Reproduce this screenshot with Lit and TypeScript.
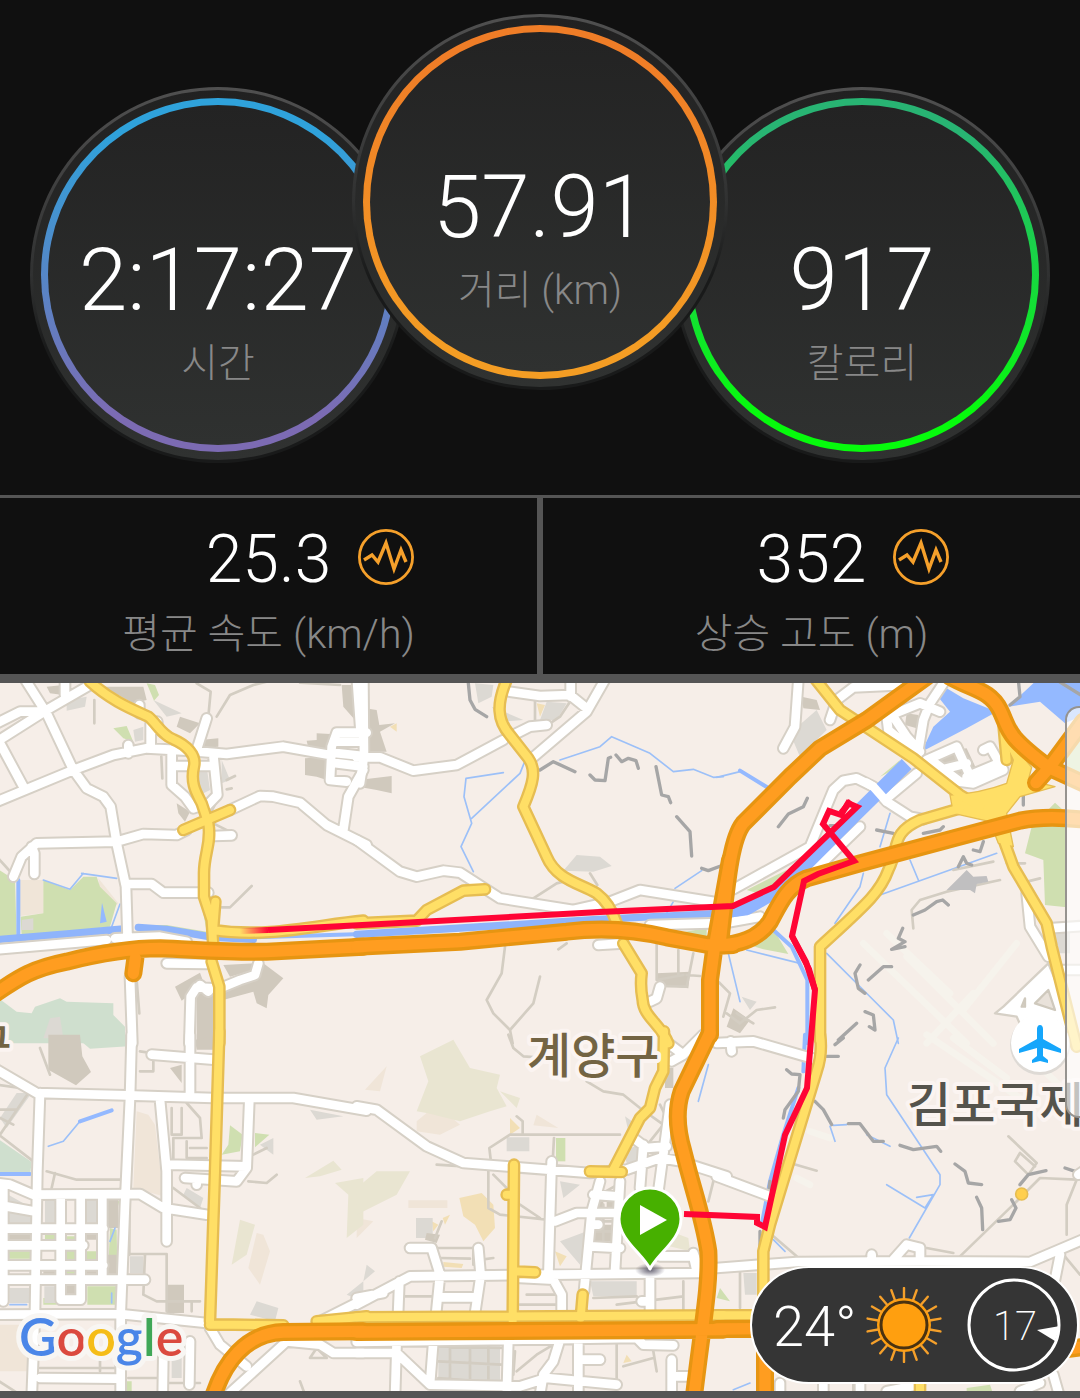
import { LitElement, html, svg, css } from "lit";
import { customElement, property } from "lit/decorators.js";

type Layer =
  | "park" | "wood" | "tan" | "hill" | "ochre" | "building" | "block" | "lake" | "plaza"
  | "river" | "canal" | "stream" | "runway" | "lane" | "trail" | "street" | "avenue" | "avenueArea" | "motorway";

interface Tile {
  x: number;
  y: number;
  layers: Partial<Record<Layer, string>>;
}

// Each tile covers 1080 x 1080 map units; path data is local to its tile.
const TILES: Tile[] = [
  {
    x: 0, y: -9,
    layers: {
      park: "M-10 565L45 600L50 775L-10 780ZM130 600L210 630L250 590L290 590L300 620L350 670L330 740L65 772L62 710L130 700ZM340 145L380 138L400 185L370 175ZM440 10L465 15L477 45L462 62ZM420 735L500 735L620 755L610 700L640 690L640 770Z",
      wood: "M-10 950L50 995L95 1000L105 980L180 955L200 965L340 970L340 1005L375 1040L375 1090L-10 1090Z",
      tan: "M60 600L130 600L130 700L60 708ZM295 595L355 670L345 680L300 640Z",
      building: "M200 60L260 50L255 80L200 92ZM460 60L545 100L500 110ZM400 150L430 140L430 180L405 185ZM590 270L620 260L630 330L600 345ZM150 1015L180 1010L190 1075L130 1075ZM65 720L100 715L100 750L65 750ZM665 240L690 300L665 310Z",
      block: "M525 920L600 878L610 905L575 940L545 962ZM670 855L765 850L760 870L690 890ZM680 925L745 905L790 850L850 895L805 945L800 985L770 970L760 935L650 965L640 1090L590 1090L590 940L640 930ZM920 182L950 180L950 160L990 162L990 205L925 205ZM915 235L985 230L980 300L950 290L915 285ZM1025 15L1065 15L1065 120L1030 80ZM140 20L190 15L190 45L150 40ZM310 20L430 20L440 60L400 70ZM540 110L600 130L570 160L530 140ZM600 180L655 175L655 200L600 205ZM530 370L570 395L555 425L535 400Z",
      lake: "M306 668L320 725L300 730Z",
      river: "M-10 779L200 762L370 747M415 742L500 748L640 772L760 778",
      canal: "M55 600L55 775M640 775L1090 762",
      stream: "M245 580L350 595M130 600L210 628L250 580M360 672L335 740",
      lane: "M590 10L632 35L625 110M650 110L690 45L760 15L800 5M900 8L1020 15M283 60L283 130M665 682L690 682L755 618M-10 530L40 585M640 430L700 460M484 230L487 295M680 300L705 288M680 328L695 325M660 345L610 440M410 900L418 1000",
      street: "M70 -10L140 100L220 270L260 325L310 350L332 380L352 500L378 620L383 780M-10 185L140 90L270 15M-10 130L60 95L130 95M0 190L70 320M195 10V45M-10 365L220 270L340 225L440 205L560 212L680 222L850 200L990 225M385 195V220M40 590L65 530L110 490L350 485L430 462L530 465L560 450M95 500L103 520V582M690 390L780 348L820 350L900 368L980 435L1100 495M385 612L455 612L490 638L625 638M452 205V130M590 210L620 115M515 222V315L555 350L580 385L610 375M640 225L652 345L620 378M520 258H640M418 75V100M472 125V150M640 468L695 466M1100 158H1010L995 200L990 300L1040 305M1000 185H1090M995 218L1090 228M995 248L1090 260M1090 270L1045 350L1030 450M1070 -10L1082 160M-10 808L320 780M345 775L480 770L560 785M500 850L620 852M660 925L720 900L765 885L775 850M640 925L590 922L572 950L568 1090M600 915L625 935M390 890L397 1090",
      avenue: "M270 5C330 60 390 85 445 110C470 130 485 165 520 178C560 195 590 225 582 260C570 310 590 340 605 370L625 430C635 490 612 520 612 580V650L635 720L640 800M635 845L658 920V1090M550 450L690 390M646 665L640 740M640 750C800 775 950 735 1090 722",
      motorway: "M-20 945C60 890 100 865 200 845C300 820 400 805 480 805C600 810 700 818 800 815L1090 800M406 835L400 880",
    },
  },
  {
    x: 1080, y: -9,
    layers: {
      building: "M395 80L420 90L490 120L430 125ZM560 65L620 70L590 120L540 120ZM345 10L400 15L395 50L355 70ZM610 572L650 525L720 530L755 558L700 575Z",
      block: "M15 85L50 90L58 135L105 130L60 155L80 215L20 215ZM-5 300L95 288L95 340L50 330L-5 320ZM890 880L990 875L985 925L895 915Z",
      park: "M850 775L1040 745L1040 775L900 770Z",
      ochre: "M530 70L555 75L540 110ZM90 140L110 130L110 155Z",
      river: "M-10 763L400 738L700 719L1080 700",
      stream: "M430 278L318 295L312 350L335 430L303 500L340 575M335 415L480 280L500 230M600 240L720 200L755 170L790 185L870 220L940 275L1000 268L1060 292L1090 290M945 625L1025 572M940 665L920 700",
      lane: "M435 800L425 880L380 960L400 1000L450 1050L458 1090M450 1050L520 970L540 890M520 655L590 610L610 605M690 580L712 615M595 808L620 790M890 790V900L970 885M955 810V885M1000 820L980 920L900 918M525 60V140M640 50L600 110L570 130M980 885L1020 888",
      trail: "M325 10L330 60L345 88L380 110M540 270L580 245L645 275M690 285L705 300L735 302L745 235L752 232M768 225L785 245L805 235L828 242L835 265M888 260L905 345L925 350L932 368M950 410L990 455L995 528M1025 565L1045 572L1090 555",
      street: "M10 -10L12 230L0 310M-10 232H60L160 272L290 255L430 180M460 165L510 140L560 135M510 240L680 95L740 -10M450 35L540 48L630 45L680 85M632 10V50M-10 480L120 575L170 590L250 572L300 578L420 655L640 690L750 665L840 630L1060 665M870 735L1050 730M715 795L790 790M870 965L890 955L900 920",
      avenue: "M440 0C410 70 410 120 450 165L505 235C530 270 520 310 490 380L560 530C590 600 660 610 710 640Q750 670 770 730M790 790L845 880Q840 920 848 960C850 1010 900 1030 925 1090M-10 730L170 722L200 690L310 632L375 628",
      motorway: "M-10 800L300 785L620 755C740 740 850 755 920 772L1060 798L1120 795M1110 540L1065 790L1050 900V1065",
    },
  },
  {
    x: 2160, y: -9,
    layers: {
      park: "M1005 368L1040 400V682L975 675L970 540L915 520L935 440ZM1035 190L1090 150V310L1040 280ZM70 790L160 748L205 822L130 808ZM80 630L200 570L150 650ZM480 290L540 240L530 265ZM245 130L270 120L275 140L255 148Z",
      building: "M210 160L290 90L320 150L290 180L240 230ZM1000 760L1050 755V820H1010ZM65 950L110 965L90 990Z",
      block: "M560 100L595 105L590 145L555 135ZM245 50L290 60L300 90L250 85ZM40 985L90 1020L60 1060L20 1040ZM625 220L740 205L780 290L720 305Z",
      lake: "M605 215L640 140L690 95L650 45L680 25L730 55L830 95L740 145ZM865 80L940 10L940 -10H1100V100L1035 130L960 65Z",
      plaza: "M985 850L850 980L825 1000L890 1010L930 1100H1080L1030 960Z",
      river: "M-20 690L80 686L190 615",
      canal: "M160 750L215 800L262 900L262 1090M60 272L155 330",
      stream: "M-10 292L60 275M510 400L480 500M430 580L420 620L345 730M480 645L830 520M570 540L595 600M320 820L430 930L520 1020L535 1090M25 820L60 965M80 810L240 850",
      runway: "M430 790L740 1090M560 830L820 1090M730 990L890 790M500 760L690 940M620 1090L760 940",
      lane: "M580 745L575 690L600 660L680 635L840 600M700 570L820 545M860 550L915 550M-10 900L30 940L10 1010M20 1000L60 1030L110 990L165 982M50 1000L100 1030M900 610L960 595",
      trail: "M175 440L205 402L250 380L262 355M470 450L520 460M610 460L660 450L670 440M580 705L615 690L650 665L668 660L685 675M548 745L535 775L555 785L515 808L555 800M445 900L490 860L515 860M420 855L405 880L415 925L435 940M355 1080L410 1030M435 995L460 1005L465 1050L448 1040M870 75L900 50L895 0M715 560L730 530L740 550L755 555M760 510L780 515L790 485M910 340V375M1010 0L1090 50M330 437L410 437",
      street: "M235 0L225 140L190 205M330 120L350 60L400 22L560 15M590 240L610 120L630 70L670 10M520 110L560 170L600 215M500 110L600 70L660 95M500 110L505 150L590 220M500 355L590 280M40 628L270 500L340 330L370 302L410 295L460 320L500 365L570 410L610 418M20 728L120 710M280 575L420 440M620 240L710 200L760 310L720 305L640 245M660 270L740 250M760 310L850 270L810 200L790 210M740 290L860 240M920 640L930 740L985 830M985 745L1090 738M1015 870H1090M850 375L830 400",
      avenue: "M280 -10L360 90L580 235L720 345L780 380M720 385L600 420C510 460 540 500 505 570C480 640 430 680 300 800V1080M840 450L880 560L980 730L995 800L1070 1100M850 130L860 240",
      avenueArea: "M690 345Q780 340 860 310L880 240L850 180L840 130H855L900 220L935 262L925 300L1005 320L900 350L860 400L880 500L835 490L810 425L700 400Z",
      motorway: "M620 -10L440 120L300 205L210 290L70 430C30 480 20 620 0 790M-30 795C60 800 120 770 150 725C180 670 200 620 260 595L420 550L700 475L900 422Q980 405 1100 420M690 -10C760 30 810 30 840 90C870 150 850 160 985 262L1090 310M1090 125L990 260L948 308",
    },
  },
  {
    x: 0, y: 1065,
    layers: {
      park: "M690 262L728 290L720 340L665 350L685 320ZM765 285L808 290L765 328ZM197 595H225V710H197ZM262 745H348V800H262ZM25 640H92V662H25ZM335 485L358 490L350 520L335 510ZM330 570L350 575L352 700L325 690ZM135 585H165V605H135ZM258 640H290V665H258ZM375 1030H395V1070H375ZM130 780H170V800H130Z",
      wood: "M220 -10H385V25L270 32ZM-10 300L95 372L90 412L-10 412Z",
      tan: "M410 220L445 230L465 260L490 475L400 450ZM-10 860L90 860L85 1000L-10 1000Z",
      hill: "M915 420L1000 368L1025 395L960 415ZM1005 435L1090 420V560L1040 600L1045 470ZM720 545L765 560L740 650L695 680Z",
      ochre: "",
      building: "M135 485H172V560H135ZM255 485H292V560H255ZM28 750H88V795H28ZM133 745H170V795H133ZM390 655H430V705H390ZM560 450L610 480L600 510L550 470ZM780 320L820 300V350ZM770 790L835 810L825 850L750 830ZM1040 770L1090 730V790ZM515 960H545V1020H515ZM50 165H95L20 270L0 240ZM930 215L1030 235L950 245ZM25 470L95 510V560H25Z",
      block: "M145 -10H240L247 55L273 102L228 142L145 95ZM585 5L640 -5V35H590ZM500 740H552V825H500ZM195 740H230V772H195ZM25 585H95V610H25ZM252 585H295V605H252ZM252 690H295V712H252ZM130 690H170V712H130ZM510 90L545 80V135ZM320 485H355V570H320ZM320 650H350V712H320Z",
      stream: "M145 325L190 310L240 250L335 217M30 800H80M330 610L345 570M335 765V795",
      canal: "M240 250L335 217M-10 408H90",
      lane: "M140 400L230 425H365M165 405L155 450M390 648H500V820M435 650L430 770L470 790H600M575 790V820M515 210V290H545V210M560 195L600 240L605 300H520V380M560 310V360H620M570 330H620M420 100H460V70M420 40L560 60M745 430L800 435L830 410M760 350L800 330M-10 285L100 370M0 290L85 165M0 215H50M0 240L40 260M388 470V650M-10 1025L60 1070M520 450L600 510M300 950V1000M120 990H350M385 885H520V830M385 1020H480M500 1035H600M60 150L-10 140M150 110L120 30M900 1030L915 1070M930 960L950 930L980 960Z",
      street: "M-10 95L110 165L380 172L640 180L880 180L1100 218M120 165L112 400L105 820L95 1080M395 -10L390 180L375 500L362 830V1080M480 185L500 400V610M570 -10V170M455 50L640 65M500 380L740 385M748 185L740 390L710 430L555 420M590 430V440M-10 435L30 440L100 470L420 468L490 510L620 530M-10 500L100 520M-10 572H310M-10 622H180M-10 682H310M-10 725H435M10 440V790M182 480V785H242V480M307 480V720M120 622H250M-10 830L360 828L620 855M630 870L660 920L740 985M690 1065L860 910L960 920L1000 945H1090M120 1020L350 1022M570 910L568 1040M490 950L488 1080M960 850L1100 780",
      avenue: "M658 -20L645 400L630 850M630 860H700L850 862M950 850L1100 835",
      motorway: "M635 1090C670 970 740 885 850 882L1090 880",
    },
  },
  {
    x: 1080, y: 1065,
    layers: {
      park: "M588 300H616V370H588Z",
      tan: "M15 155L80 85L60 160ZM170 250L230 200L300 260L240 290L170 280ZM530 230L595 270L520 262ZM145 487H262V510H145ZM-310 585L-290 590L-270 640L-300 740L-335 690ZM-10 540L40 550L-10 600Z",
      hill: "M180 55L280 5L330 90L420 110L410 150L440 205L390 220L300 250L200 225L170 220L205 130ZM50 400L150 400L110 470L50 500L-10 530V450ZM420 160L480 180L470 210ZM905 570L985 600L990 640L910 620Z",
      ochre: "M298 480L365 465L400 500L405 570L370 610L345 560L310 535ZM450 240L480 270L450 290ZM248 540L270 530L255 560ZM215 550L235 560L220 580ZM585 640L620 655L600 685ZM250 672L310 678L305 690L250 686ZM800 950L815 970L790 975Z",
      building: "M440 298H508V340H440ZM168 540H218V600H168ZM600 430L660 440L610 480ZM600 610L680 580L660 680ZM690 730H830V775H700ZM235 925H420V1040H235ZM790 340L835 320V380L800 375ZM20 680L45 700L10 730ZM795 235L830 260L805 280Z",
      block: "M700 490H730V515H700ZM740 490H770V515H740ZM705 560H760V610H705ZM200 585L240 590L230 615L195 605ZM915 90H940V150H915Z",
      stream: "M1045 80L1015 190",
      lane: "M395 390L388 330L450 290H780M582 300L578 370M385 400V510L420 530L560 545M400 410L445 455M480 500L540 540M445 -10L460 30L490 55L560 60M680 130L730 160L790 170L840 210L910 260L870 310M230 630H340V680M240 660L330 662M245 550L225 600M470 235L488 250V285M230 380L310 385M235 925L425 930M235 970L425 980M235 1020L425 1035M270 920V1030M330 925V1035M385 925V1035M770 800L970 775M970 730V830M700 780L830 775M790 985L880 960M880 940L890 1000M700 550H770M700 580H770M730 500V620M1060 430L1045 490M500 770H600M480 800H600M125 775H340M470 1000L530 950L580 920M700 820H850M720 470L790 430M365 665L400 660M465 940L460 1010M770 910V1040M900 200L930 260",
      street: "M-10 205L50 215L200 325L310 375L690 405L800 395L900 360L960 370L1100 415M575 370L565 715M-10 800L150 715L400 712L1020 705M-10 780L70 765M150 630H215L240 710L225 860M355 630L362 712L340 860M118 730L113 860M235 778H340M585 550L650 525H790M720 430L695 520L672 760M780 430L765 700M700 470L770 475M850 320L840 450M930 200L895 460M820 300L860 330L920 325M700 560H715M870 720V840M845 790H870M690 625L780 630M900 655H1000L1010 700M480 720L580 725L605 770V830M930 20L970 50L1030 -10M935 70L970 50M-10 912L830 900L850 920L940 922M110 905L105 1080M220 910L210 1040M445 905L440 1080M600 905L580 970L550 1010L540 1070M655 905V1070M660 965H720M-10 945H110L210 1040L480 1045L560 1020L770 1040M935 965V1080M950 1015H990M1000 645L1020 700",
      avenue: "M-10 838L1090 832M462 380L458 850M440 470H460M460 700L525 703M668 770L662 840M912 -20L910 100L885 150L870 210L840 240L760 395M690 400L785 402",
      motorway: "M-10 882L300 880L1090 875M1050 -16L965 160C945 220 955 290 970 340C1000 460 1030 540 1045 640C1050 740 1030 840 1000 1090",
    },
  },
  {
    x: 2160, y: 1065,
    layers: {
      park: "M0 750L30 790L-10 780ZM740 1050L810 1040L820 1070H740Z",
      building: "M70 705H110V770H75Z",
      ochre: "M670 680L690 655L712 655L700 690Z",
      canal: "M255 -10L250 100M235 150L190 290L150 430L125 560",
      stream: "M535 0L495 90L500 170L660 410V440L568 600M340 262L380 260M330 265L345 310M500 440L615 510L640 470L590 478M440 290L510 325M160 605L195 640M40 1055L90 1035",
      runway: "M620 -10L900 180M700 0L860 120M890 20L1090 210M270 280L330 300M230 420L270 440",
      lane: "M720 655L880 500L960 420L1070 425L1040 500V590M865 295L950 375L925 410L885 370L900 345L945 385M155 590L230 655M620 630L700 645M60 700V810M210 375L290 398M1030 650L1080 710M400 1040V1070",
      trail: "M200 95L215 108L240 110L235 160L195 215L190 240M285 190L310 215L335 260M385 257L420 257L460 310L490 310M540 322L580 335L650 325L662 340M705 378L735 400L745 435L785 440M770 478L785 510L788 575M835 550L870 545L888 510L875 485M900 440L925 410L978 398M345 20L370 0M1035 390L1065 400M320 55H355M120 580V640M150 430L145 470",
      street: "M-10 690L230 672L600 670L930 672L1100 600M-10 15L100 10L290 65M32 10L35 40M-10 415L150 475M455 650V670M520 665L560 620L600 630V670M1020 650L990 800M1075 410L1090 400M900 1060L960 1035M1000 1010L1020 1080M180 1035V1080M310 1035V1080M420 1035V1080M500 1060L600 1040",
      avenue: "M300 -10C306 30 300 70 290 100L150 560L130 640V820M-10 832H130M600 1030V1080",
      motorway: "M-10 873L120 872M135 900V1080M1030 935L1100 925",
    },
  },
];

const AREAS: Layer[] = ["tan", "hill", "park", "wood", "ochre", "building", "block", "lake", "plaza"];
const THIN: Layer[] = ["runway", "stream", "canal", "river", "lane", "trail"];

@customElement("route-map")
export class RouteMap extends LitElement {
  static styles = css`
    :host { display: block; }
    .map { display: block; width: 100%; background: #f6eee8; }
    path { fill: none; stroke-linejoin: round; stroke-linecap: round; }
    .park { fill: #cfdfb0; }
    .wood { fill: #cfdfce; }
    .tan { fill: #f0e5d8; }
    .hill { fill: #e9e5d1; }
    .ochre { fill: #f2dfb5; }
    .building { fill: #dcd9d3; }
    .block { fill: #d0c9bd; }
    .lake { fill: #94b9ff; }
    .plaza { fill: #fff; stroke: #d6d0c6; stroke-width: 7; }
    .plaza-island { fill: #e9e2da; stroke: #cfc9bd; stroke-width: 7; }
    .runway { stroke: #f6f3ec; stroke-width: 20; }
    .stream { stroke: #9cc0f8; stroke-width: 5; }
    .canal { stroke: #94b9ff; stroke-width: 12; }
    .river { stroke: #8fb4fb; stroke-width: 22; }
    .wide-river { stroke: #8fb4ff; stroke-width: 42; stroke-linecap: butt; }
    .lane { stroke: #d3cdc2; stroke-width: 8; }
    .hangar { fill: #c0bfc0; }
    .trail { stroke: #a6a6a6; stroke-width: 10; }
    .street-case { stroke: #d6d0c6; stroke-width: 38; }
    .street { stroke: #fff; stroke-width: 26; }
    .avenue-case { stroke: #e6bd52; stroke-width: 38; }
    .avenue { stroke: #ffdf66; stroke-width: 24; }
    .avenueArea { fill: #ffdf66; stroke: #e6bd52; stroke-width: 4; }
    .motorway-case { stroke: #e69512; stroke-width: 54; }
    .motorway { stroke: #ff9d20; stroke-width: 34; }
    .route { stroke: #ff0535; stroke-width: 6; stroke-linejoin: miter; stroke-linecap: butt; }
    .route-start { stroke: url(#fade); stroke-width: 6; stroke-linecap: butt; }
    .place {
      font-family: "Noto Sans CJK KR", sans-serif;
      font-size: 48px;
      font-weight: 500;
      paint-order: stroke;
      stroke: #fbf4f1;
      stroke-width: 8px;
      stroke-linejoin: round;
    }
    .district { fill: #736443; }
    .airport { fill: #55534c; }
    .edge { font-size: 44px; }
    .poi { fill: #fff; }
    .poi-ring { fill: #dedad5; }
    .plane { fill: #16a6fb; }
    .pin { fill: #47b000; stroke: #fff; stroke-width: 3; }
    .play { fill: #fff; }
    .brand {
      font-family: Lato, sans-serif;
      font-size: 52px;
      font-weight: 600;
      paint-order: stroke;
      stroke: #f8f6f3;
      stroke-width: 10px;
      stroke-linejoin: round;
    }
    .blue { fill: #4a86e8; }
    .red { fill: #db4a3f; }
    .gold { fill: #f5bd18; }
    .green { fill: #3fa757; }
  `;

  private draw(layer: Layer, cls: string = layer) {
    return TILES.map((t) =>
      t.layers[layer]
        ? svg`<path class=${cls} transform="translate(${t.x} ${t.y})" d=${t.layers[layer]!}></path>`
        : null
    );
  }

  render() {
    return html`
      <svg class="map" viewBox="0 0 3240 2124" role="img" aria-label="계양구 김포국제공항">
        <defs>
          <linearGradient id="fade" gradientUnits="userSpaceOnUse" x1="240" y1="0" x2="268" y2="0">
            <stop offset="0" stop-color="#ff0535" stop-opacity="0"></stop>
            <stop offset="1" stop-color="#ff0535"></stop>
          </linearGradient>
          <radialGradient id="shade">
            <stop offset="0" stop-color="#403c50" stop-opacity="0.8"></stop>
            <stop offset="1" stop-color="#403c50" stop-opacity="0"></stop>
          </radialGradient>
        </defs>
        ${AREAS.map((l) => this.draw(l))}
        ${THIN.map((l) => this.draw(l))}
        <g transform="translate(2160 -9)">
          <path class="hangar" d="M680 630L720 590L740 570L760 590L800 588L805 605L770 612L765 640L750 630Z"></path>
          <path class="plaza-island" d="M945 970L985 930L1005 990ZM905 980L915 955L915 980Z"></path>
        </g>
        ${this.draw("street", "street-case")}
        ${this.draw("street")}
        <g transform="translate(2160 -9)">
          <path class="wide-river" d="M30 692L80 685L190 620L400 410L560 252"></path>
          <path class="street" d="M440 308L460 320L500 365"></path>
        </g>
        ${this.draw("avenue", "avenue-case")}
        ${this.draw("avenueArea")}
        ${this.draw("avenue")}
        ${this.draw("motorway", "motorway-case")}
        ${this.draw("motorway")}
        <circle cx="3065" cy="1533" r="18" fill="#ffcf4d" stroke="#e6bd52" stroke-width="5"></circle>
        <g transform="scale(3) translate(0 -683)">
          <path class="route-start" d="M240 931L268 930"></path>
          <path class="route" d="M268 930L400 923L600 912L733 906L774 887L857 807L848 803L841 815L829 811L823 824L854 861L818 874L804 881L792 936L809 969L815 990L807 1088L785 1135L765 1227L757 1223V1217L684 1214"></path>
          <path class="route" d="M792 936L806 962L815 990M841 813L851 801"></path>
          <text class="place district" x="527" y="1073">계양구</text>
          <text class="place district edge" x="-29" y="1061">구</text>
          <circle class="poi-ring" cx="1040" cy="1045" r="30"></circle>
          <circle class="poi" cx="1040" cy="1043" r="29"></circle>
          <path class="plane" d="M1040 1025c2 0 3 2 3 4v10l18 10v4l-18-5v8l5 4v3l-8-2l-8 2v-3l5-4v-8l-18 5v-4l18-10v-10c0-2 1-4 3-4z"></path>
          <text class="place airport" x="907" y="1122">김포국제공항</text>
          <ellipse cx="650" cy="1270" rx="15" ry="7" fill="url(#shade)"></ellipse>
          <path class="pin" d="M650 1269C643 1254 619 1240 619 1219A31 31 0 0 1 681 1219C681 1240 657 1254 650 1269Z"></path>
          <path class="play" d="M640 1205L667 1220L640 1235Z"></path>
          <text class="brand" x="19" y="1356"><tspan class="blue">G</tspan><tspan class="red">o</tspan><tspan class="gold">o</tspan><tspan class="blue">g</tspan><tspan class="green">l</tspan><tspan class="red">e</tspan></text>
        </g>
      </svg>
    `;
  }
}

@customElement("stat-dial")
export class StatDial extends LitElement {
  @property() value = "";
  @property() label = "";

  static styles = css`
    :host {
      display: block;
      box-sizing: border-box;
      flex: none;
      width: 376px;
      height: 376px;
      padding: 3px;
      border-radius: 50%;
      background: linear-gradient(#505050, #303131 50%, #191a1a 70%, #191a1a);
    }
    .rim {
      box-sizing: border-box;
      height: 100%;
      padding: 8px;
      border-radius: 50%;
      background: linear-gradient(#212121, #303231);
    }
    .ring {
      box-sizing: border-box;
      height: 100%;
      padding: 7px;
      border-radius: 50%;
      background: linear-gradient(var(--ring-from) 10%, var(--ring-to) 90%);
    }
    .face {
      box-sizing: border-box;
      display: flex;
      flex-direction: column;
      align-items: center;
      height: 100%;
      padding-top: 123px;
      border-radius: 50%;
      background: linear-gradient(#232323, #2f3130);
      white-space: nowrap;
    }
    .value { color: #fff; font-size: 87px; font-weight: 300; line-height: 104px; }
    .label { color: #888; font-size: 40px; font-weight: 300; line-height: 64px; }
  `;

  render() {
    return html`
      <div class="rim"><div class="ring"><div class="face">
        <div class="value">${this.value}</div>
        <div class="label">${this.label}</div>
      </div></div></div>
    `;
  }
}

@customElement("app-root")
export class AppRoot extends LitElement {
  static styles = css`
    :host {
      display: block;
      padding-bottom: 7px;
      background: #555;
      color: #fff;
      font-family: Roboto, "Noto Sans CJK KR", sans-serif;
      font-weight: 300;
    }
    .dials {
      display: flex;
      justify-content: center;
      padding: 14px 0 32px;
      background: #101010;
    }
    .side { margin-top: 73px; }
    .time { --ring-from: #2fa2db; --ring-to: #7c6bb3; }
    .distance {
      --ring-from: #ef7d27;
      --ring-to: #f49d24;
      z-index: 1;
      margin: 0 -54px;
    }
    .calories { --ring-from: #28b473; --ring-to: #06fb0c; }
    .stats {
      display: grid;
      grid-template-columns: 1fr 1fr;
      gap: 6px;
      padding: 3px 0 9px;
    }
    .stat {
      box-sizing: border-box;
      min-height: 176px;
      padding-top: 22px;
      background: #101010;
      text-align: center;
    }
    .figure {
      display: grid;
      grid-template-columns: 1fr auto 1fr;
      gap: 27px;
    }
    .number { grid-column: 2; font-size: 66px; line-height: 80px; }
    .pulse { width: 57px; height: 57px; margin-top: 9px; }
    .caption { color: #888; font-size: 41px; line-height: 60px; padding-top: 4px; }
    .map-area { position: relative; overflow: hidden; }
    .drawer {
      position: absolute;
      top: 23px;
      right: 0;
      box-sizing: border-box;
      width: 15px;
      height: 412px;
      border: 2px solid #96938f;
      border-right: 0;
      border-radius: 14px 0 0 14px;
      background: #ffffffa6;
    }
    .weather {
      position: absolute;
      right: 1px;
      bottom: 7px;
      box-sizing: border-box;
      display: flex;
      align-items: center;
      gap: 12px;
      height: 118px;
      padding: 0 16px 0 21px;
      border: 2px solid #fff;
      border-radius: 59px;
      background: #353535;
    }
    .temp { width: 81px; padding-top: 4px; font-size: 56px; line-height: 60px; }
    .sun { width: 76px; height: 76px; }
    .wind { width: 94px; height: 94px; margin-left: 13px; }
    .wind-speed { fill: #fff; font-size: 40px; font-weight: 200; }
  `;

  private pulse() {
    return html`
      <svg class="pulse" viewBox="0 0 57 57" fill="none" stroke="#f5a02b" aria-hidden="true">
        <circle cx="28" cy="28" r="26.6" stroke-width="2.8"></circle>
        <path d="M6 31L14 26L20 33L28 14L36 40L43 21L48 33" stroke-width="3.4" stroke-miterlimit="8"></path>
      </svg>
    `;
  }

  private stat(value: string, label: string) {
    return html`
      <div class="stat">
        <div class="figure"><span class="number">${value}</span>${this.pulse()}</div>
        <div class="caption">${label}</div>
      </div>
    `;
  }

  render() {
    const rays = Array.from({ length: 18 }, (_, i) => i * 20);
    return html`
      <section class="dials">
        <stat-dial class="side time" value="2:17:27" label="시간"></stat-dial>
        <stat-dial class="distance" value="57.91" label="거리 (km)"></stat-dial>
        <stat-dial class="side calories" value="917" label="칼로리"></stat-dial>
      </section>
      <section class="stats">
        ${this.stat("25.3", "평균 속도 (km/h)")}
        ${this.stat("352", "상승 고도 (m)")}
      </section>
      <section class="map-area">
        <route-map></route-map>
        <div class="drawer"></div>
        <div class="weather">
          <span class="temp">24°</span>
          <svg class="sun" viewBox="-38 -38 76 76" aria-hidden="true">
            <circle r="27" fill="#ff9f0f"></circle>
            <circle r="23" fill="#ff9f0f" stroke="#4a3210" stroke-width="3"></circle>
            ${rays.map(
              (a) => svg`<path d="M0 -26V-37" stroke="#f5a02b" stroke-width="2.4" stroke-linecap="round" transform="rotate(${a})"></path>`
            )}
          </svg>
          <svg class="wind" viewBox="-47 -47 94 94">
            <circle r="45" fill="none" stroke="#fff" stroke-width="3"></circle>
            <path d="M23 5L46 1L41 16Z" fill="#fff"></path>
            <text class="wind-speed" x="1" y="15" text-anchor="middle">17</text>
          </svg>
        </div>
      </section>
    `;
  }
}
